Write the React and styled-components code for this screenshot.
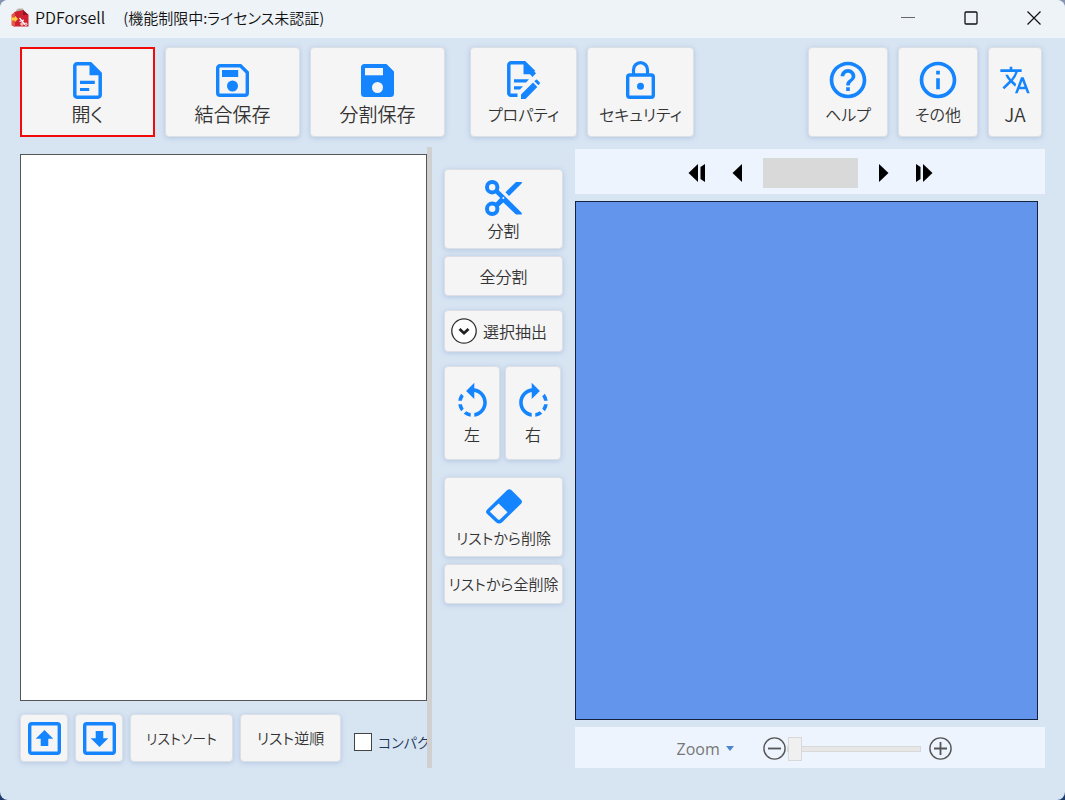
import React, { useState } from 'react';
import styled, { createGlobalStyle } from 'styled-components';
import { MdHelpOutline, MdInfoOutline, MdTranslate, MdRotateLeft, MdRotateRight } from 'react-icons/md';

const BLUE = '#1585ff';

const GlobalStyle = createGlobalStyle`
  * {
    box-sizing: border-box;
  }

  body {
    margin: 0;
    background: linear-gradient(#8794b0, #1d3a6c);
    font-family: 'Noto Sans CJK JP', sans-serif;
    font-feature-settings: 'palt';
    color: #333;
  }

  button, input, select {
    font: inherit;
    font-feature-settings: inherit;
    color: inherit;
  }
`;

const Window = styled.div`
  display: flex;
  flex-direction: column;
  min-height: 100vh;
  background: #d7e4f2;
  border-radius: 8px;
  overflow: hidden;
`;

const TitleBar = styled.header`
  display: flex;
  align-items: center;
  height: 38px;
  padding: 0 0 3px 11px;
  background: #eef3f8;
`;

const Title = styled.h1`
  display: flex;
  flex: 1;
  align-items: baseline;
  gap: 18px;
  margin: 0 0 0 6px;
  font-size: 16px;
  line-height: 24px;
  font-weight: 350;
  color: #111;
`;

const LicenseState = styled.span`
  font-size: 15px;
`;

const WindowButton = styled.button`
  display: flex;
  align-items: center;
  justify-content: center;
  width: 63px;
  height: 34px;
  padding: 0;
  border: none;
  background: none;
  color: #111;
`;

const Toolbar = styled.nav`
  display: flex;
  gap: 10px;
  padding: 9px 23px 10px 20px;
`;

const ToolGroup = styled.div`
  display: flex;
  gap: 10px;
  margin-left: ${(props) => (props.$end ? 'auto' : props.$apart ? '15px' : '0')};
`;

const Button = styled.button`
  display: flex;
  flex-direction: ${(props) => (props.$row ? 'row' : 'column')};
  align-items: center;
  justify-content: ${(props) => (props.$row ? 'flex-start' : 'center')};
  gap: 6px;
  flex-shrink: 0;
  width: ${(props) => (props.$width ? `${props.$width}px` : 'auto')};
  height: ${(props) => props.$height}px;
  padding: ${(props) => (props.$row ? '0 6px' : '0')};
  border: 1px solid #dcdfe4;
  border-radius: 4px;
  background: #f5f5f5;
  box-shadow: 0 1px 5px rgba(110, 140, 200, 0.35);
  font-size: ${(props) => props.$size || 16}px;
  line-height: 22px;
  font-weight: 350;
  white-space: nowrap;
  cursor: pointer;
`;

const IconButton = styled(Button)`
  gap: 0;
`;

const ToolButton = styled(IconButton)`
  height: 90px;
  line-height: 24px;
  ${(props) => props.$selected && 'border: 2px solid #f00a0a; border-radius: 0; box-shadow: none;'}
`;

const IconSlot = styled.span`
  display: flex;
  align-items: center;
  justify-content: center;
  height: 42px;
  color: ${BLUE};

  ${ToolButton} & {
    height: 44px;
  }
`;

const Workspace = styled.main`
  display: flex;
  flex: 1;
  padding: 0 20px 32px;
`;

const ListPane = styled.section`
  display: flex;
  flex-direction: column;
  flex: 407 1 0;
  min-width: 0;
  padding: 7px 0 6px;
`;

const FileList = styled.div`
  flex: 1;
  border: 1px solid #555;
  background: #fff;
`;

const ListActions = styled.div`
  display: flex;
  gap: 7px;
  margin-top: 13px;
`;

const CompactLabel = styled.label`
  display: flex;
  align-items: center;
  gap: 6px;
  margin: 8px 0 0 6px;
  font-size: 14px;
  font-weight: 350;
  white-space: nowrap;
  color: #1d3557;
`;

const CheckBox = styled.input`
  appearance: none;
  flex-shrink: 0;
  width: 18px;
  height: 18px;
  margin: 0;
  border: 1px solid #444;
  background: #fff;

  &:checked {
    background: ${BLUE};
  }
`;

const Splitter = styled.div`
  width: 5px;
  background: #d0d0d0;
`;

const ActionPane = styled.section`
  display: flex;
  flex-direction: column;
  gap: 14px;
  width: 119px;
  margin: 22px 12px 0;
`;

const ActionGroup = styled.div`
  display: flex;
  flex-direction: ${(props) => (props.$row ? 'row' : 'column')};
  gap: ${(props) => (props.$row ? 5 : 7)}px;
  margin-top: ${(props) => (props.$apart ? '3px' : '0')};
`;

const PreviewPane = styled.section`
  display: flex;
  flex-direction: column;
  gap: 7px;
  flex: 470 1 0;
  min-width: 0;
  padding-top: 2px;
`;

const PreviewBar = styled.div`
  display: flex;
  align-items: center;
  justify-content: center;
  background: #edf4fd;
`;

const PageBar = styled(PreviewBar)`
  height: 45px;
  padding-top: 2px;
`;

const ZoomBar = styled(PreviewBar)`
  height: 41px;
  padding: 2px 0 0 8px;
`;

const PageButton = styled.button`
  display: flex;
  align-items: center;
  justify-content: center;
  width: 40px;
  height: 32px;
  padding: 0;
  border: none;
  background: none;
  color: #000;
`;

const PageInput = styled.input`
  width: 95px;
  height: 30px;
  margin: 0 6px;
  border: 1px solid #d6dbd9;
  background: #d9d9d9;
  text-align: center;
`;

const Preview = styled.div`
  flex: 1;
  margin-right: 7px;
  border: 1px solid #14213f;
  background: #6495ed;
`;

const ZoomPicker = styled.div`
  display: flex;
  align-items: center;
  gap: 5px;
  margin-right: 29px;
  color: #4a86cf;
`;

const ZoomSelect = styled.select`
  appearance: none;
  padding: 0;
  border: none;
  background: none;
  font-family: 'Open Sans', sans-serif;
  font-size: 16px;
  color: #777;
`;

const RoundButton = styled.button`
  display: flex;
  padding: 0;
  border: none;
  background: none;
  color: #555;
`;

const ZoomSlider = styled.input`
  appearance: none;
  width: 134px;
  height: 24px;
  margin: 0 8px 0 1px;
  background: none;

  &::-webkit-slider-runnable-track {
    height: 6px;
    border: 1px solid #d8d8d8;
    background: #e7e7e7;
  }

  &::-webkit-slider-thumb {
    appearance: none;
    width: 14px;
    height: 24px;
    margin-top: -10px;
    border: 1px solid #d8d8d8;
    background: #f0f0f0;
  }
`;

const AppLogo = () => (
	<svg width="18" height="20" viewBox="0 0 18 20">
		<path d="M5 2.5L7 0.5H12L13 3L5 5Z" fill="#b9b3ac" />
		<path d="M3 4L12 2L17.5 7V18.5H3Z" fill="#cf2230" />
		<path d="M12 2L17.5 7H12Z" fill="#8f1520" />
		<path d="M0.5 6.5L4 4V19L0.5 17.5Z" fill="#e2574c" />
		<path d="M0.5 9.5H4V7.8L7 11L4 14V12.5H0.5Z" fill="#ffd23c" />
		<path d="M8.5 10L14 16.5M8.5 13.5L13 12" stroke="#fff" strokeWidth="1.2" />
		<circle cx="14.8" cy="16.2" r="1.2" fill="none" stroke="#fff" />
		<circle cx="11" cy="16" r="1.2" fill="none" stroke="#fff" />
	</svg>
);

const FileIcon = () => (
	<svg width="29" height="37" viewBox="0 0 29 37">
		<path d="M4 1.8H17.5L27.2 11.5V33a2.2 2.2 0 0 1-2.2 2.2H4A2.2 2.2 0 0 1 1.8 33V4A2.2 2.2 0 0 1 4 1.8Z" fill="none" stroke="currentColor" strokeWidth="3.5" />
		<path d="M16.5 2H18.5L27.5 11V13.3H16.5ZM7 18.8H21.8V22H7ZM7 25.9H16.2V29.1H7Z" fill="currentColor" />
	</svg>
);

const SaveIcon = () => (
	<svg width="33" height="33" viewBox="0 0 33 33">
		<path d="M4 1.7H24.5L31.3 8.5V29a2.3 2.3 0 0 1-2.3 2.3H4A2.3 2.3 0 0 1 1.7 29V4A2.3 2.3 0 0 1 4 1.7Z" fill="none" stroke="currentColor" strokeWidth="3.4" />
		<path d="M6 6H22.2V13H6Z" fill="currentColor" />
		<circle cx="16.5" cy="22" r="5.5" fill="currentColor" />
	</svg>
);

const SaveFilledIcon = () => (
	<svg width="33" height="33" viewBox="0 0 33 33">
		<path d="M3.5 0H25.5L33 7.5V29.5A3.5 3.5 0 0 1 29.5 33H3.5A3.5 3.5 0 0 1 0 29.5V3.5A3.5 3.5 0 0 1 3.5 0Z" fill="currentColor" />
		<path d="M4 4H22V11.3H4Z" fill="#f5f5f5" />
		<circle cx="16.5" cy="23.5" r="5.5" fill="#f5f5f5" />
	</svg>
);

const PropertyIcon = () => (
	<svg width="33" height="38" viewBox="0 0 33 38">
		<path d="M10.5 34.3H4A2.2 2.2 0 0 1 1.8 32V4A2.2 2.2 0 0 1 4 1.8H17.5L27 11" fill="none" stroke="currentColor" strokeWidth="3.5" />
		<path d="M16.5 2H19L29 12.2L25.5 16L23 13.3H16.5ZM7 18.2H22L19 21.4H7ZM7 25.3H16L13 28.5H7Z" fill="currentColor" />
		<path d="M14 38V33.5L26 21.5L30.3 26L18.5 38ZM27.3 20.3L29 18.7Q29.6 18.3 30.2 18.8L32.8 21.5Q33.2 22.1 32.7 22.8L31.4 24.3Z" fill="currentColor" />
	</svg>
);

const LockIcon = () => (
	<svg width="29" height="38" viewBox="0 0 29 38">
		<path d="M7.5 14V8.7a7 7 0 0 1 14 0V14" fill="none" stroke="currentColor" strokeWidth="3.2" />
		<rect x="1.7" y="14" width="25.6" height="22.3" rx="2" fill="none" stroke="currentColor" strokeWidth="3.4" />
		<circle cx="14.5" cy="25.2" r="3.5" fill="currentColor" />
	</svg>
);

const ScissorsIcon = () => (
	<svg width="37" height="36" viewBox="0 0 37 36">
		<circle cx="7.2" cy="7.2" r="5.2" fill="none" stroke="currentColor" strokeWidth="4" />
		<circle cx="7.2" cy="28.8" r="5.2" fill="none" stroke="currentColor" strokeWidth="4" />
		<path d="M10 12.8L13 9.4L36.8 33V34.5H31L18.3 22.4L13 27.2L9.7 23.7L15.2 18Z" fill="currentColor" />
		<path d="M20.5 12.2L31 2H36.8V3.3L24 16Z" fill="currentColor" />
		<circle cx="18.4" cy="18" r="1" fill="#f5f5f5" />
	</svg>
);

const EraserIcon = () => (
	<svg width="36" height="35" viewBox="0 0 36 35">
		<path d="M21 1.3a3.4 3.4 0 0 1 4.6 0L34.8 10.4a3.2 3.2 0 0 1 0 4.6L16.2 33.2a4.6 4.6 0 0 1-6.2 0L1.2 25a3.2 3.2 0 0 1 0-4.6Z" fill="currentColor" />
		<path d="M12.6 14.5L21.5 23.2L14.2 30.3a1.8 1.8 0 0 1-2.4 0L4.2 23a0.5 0.5 0 0 1 0-0.7Z" fill="#f5f5f5" />
	</svg>
);

const ArrowBoxIcon = ({ down }) => (
	<svg width="33" height="33" viewBox="0 0 33 33">
		<rect x="1.7" y="1.7" width="29.6" height="29.6" rx="2" fill="none" stroke="currentColor" strokeWidth="3.4" />
		<path d={down ? 'M12.7 9H20.3V16.2H25.3L16.5 25L7.7 16.2H12.7Z' : 'M12.7 24H20.3V16.8H25.3L16.5 8L7.7 16.8H12.7Z'} fill="currentColor" />
	</svg>
);

const ExpandIcon = () => (
	<svg width="26" height="26" viewBox="0 0 26 26">
		<circle cx="13" cy="13" r="12.2" fill="#fff" stroke="#333" strokeWidth="1.3" />
		<path d="M8.5 11L13 15.2L17.5 11" fill="none" stroke="#222" strokeWidth="2.8" />
	</svg>
);

const PageIcon = ({ double, forward }) => (
	<svg width={double ? 18 : 10} height="18" viewBox={double ? '0 0 18 18' : '0 0 10 18'}>
		<g transform={forward ? `matrix(-1 0 0 1 ${double ? 18 : 10} 0)` : undefined} fill="currentColor">
			<path d="M0.5 9L10 0V18Z" />
			{double && <path d="M12.5 3L17 0V18L12.5 15Z" />}
		</g>
	</svg>
);

const SignIcon = ({ plus }) => (
	<svg width="23" height="23" viewBox="0 0 23 23" fill="none" stroke="currentColor">
		<circle cx="11.5" cy="11.5" r="10.6" strokeWidth="1.4" />
		<path d={plus ? 'M5 11.5H18M11.5 5V18' : 'M5 11.5H18'} strokeWidth="1.8" />
	</svg>
);

const App = () => {
	const [compact, setCompact] = useState(false);
	const [zoom, setZoom] = useState(0);

	return (
		<>
			<GlobalStyle />
			<Window>
				<TitleBar>
					<AppLogo />
					<Title>
						<span>PDForsell</span>
						<LicenseState>(機能制限中:ライセンス未認証)</LicenseState>
					</Title>
					<WindowButton aria-label="最小化">
						<svg width="14" height="14" viewBox="0 0 14 14"><path d="M0 6.5H14" stroke="#666" /></svg>
					</WindowButton>
					<WindowButton aria-label="最大化">
						<svg width="14" height="14" viewBox="0 0 14 14"><rect x="1" y="1" width="12" height="12" rx="1" fill="none" stroke="currentColor" strokeWidth="1.3" /></svg>
					</WindowButton>
					<WindowButton aria-label="閉じる">
						<svg width="14" height="14" viewBox="0 0 14 14"><path d="M0.5 0.5L13.5 13.5M13.5 0.5L0.5 13.5" stroke="currentColor" strokeWidth="1.2" /></svg>
					</WindowButton>
				</TitleBar>

				<Toolbar>
					<ToolGroup>
						<ToolButton $width={135} $size={19} $selected><IconSlot><FileIcon /></IconSlot>開く</ToolButton>
						<ToolButton $width={135} $size={19}><IconSlot><SaveIcon /></IconSlot>結合保存</ToolButton>
						<ToolButton $width={135} $size={19}><IconSlot><SaveFilledIcon /></IconSlot>分割保存</ToolButton>
					</ToolGroup>
					<ToolGroup $apart>
						<ToolButton $width={107}><IconSlot><PropertyIcon /></IconSlot>プロパティ</ToolButton>
						<ToolButton $width={107}><IconSlot><LockIcon /></IconSlot>セキュリティ</ToolButton>
					</ToolGroup>
					<ToolGroup $end>
						<ToolButton $width={80}><IconSlot><MdHelpOutline size={44} /></IconSlot>ヘルプ</ToolButton>
						<ToolButton $width={80}><IconSlot><MdInfoOutline size={44} /></IconSlot>その他</ToolButton>
						<ToolButton $width={54} $size={19}><IconSlot><MdTranslate size={32} /></IconSlot>JA</ToolButton>
					</ToolGroup>
				</Toolbar>

				<Workspace>
					<ListPane>
						<FileList />
						<ListActions>
							<Button $width={48} $height={48} aria-label="上へ"><IconSlot><ArrowBoxIcon /></IconSlot></Button>
							<Button $width={48} $height={48} aria-label="下へ"><IconSlot><ArrowBoxIcon down /></IconSlot></Button>
							<Button $width={103} $height={48} $size={14}>リストソート</Button>
							<Button $width={101} $height={48} $size={15}>リスト逆順</Button>
							<CompactLabel>
								<CheckBox type="checkbox" checked={compact} onChange={(e) => setCompact(e.target.checked)} />
								コンパク
							</CompactLabel>
						</ListActions>
					</ListPane>

					<Splitter />

					<ActionPane>
						<ActionGroup>
							<IconButton $height={80}><IconSlot><ScissorsIcon /></IconSlot>分割</IconButton>
							<Button $height={40}>全分割</Button>
						</ActionGroup>
						<Button $height={42} $row><ExpandIcon />選択抽出</Button>
						<ActionGroup $row>
							<IconButton $width={56} $height={94}><IconSlot><MdRotateLeft size={43} /></IconSlot>左</IconButton>
							<IconButton $width={56} $height={94}><IconSlot><MdRotateRight size={43} /></IconSlot>右</IconButton>
						</ActionGroup>
						<ActionGroup $apart>
							<IconButton $height={80} $size={15}><IconSlot><EraserIcon /></IconSlot>リストから削除</IconButton>
							<Button $height={40} $size={15}>リストから全削除</Button>
						</ActionGroup>
					</ActionPane>

					<PreviewPane>
						<PageBar>
							<PageButton aria-label="最初のページ"><PageIcon double /></PageButton>
							<PageButton aria-label="前のページ"><PageIcon /></PageButton>
							<PageInput aria-label="ページ" />
							<PageButton aria-label="次のページ"><PageIcon forward /></PageButton>
							<PageButton aria-label="最後のページ"><PageIcon double forward /></PageButton>
						</PageBar>
						<Preview />
						<ZoomBar>
							<ZoomPicker>
								<ZoomSelect aria-label="Zoom">
									<option>Zoom</option>
								</ZoomSelect>
								<svg width="8" height="5" viewBox="0 0 8 5"><path d="M0 0H8L4 5Z" fill="currentColor" /></svg>
							</ZoomPicker>
							<RoundButton aria-label="縮小" onClick={() => setZoom(Math.max(0, zoom - 10))}><SignIcon /></RoundButton>
							<ZoomSlider
								type="range"
								aria-label="倍率"
								min="0"
								max="100"
								value={zoom}
								onChange={(e) => setZoom(Number(e.target.value))}
							/>
							<RoundButton aria-label="拡大" onClick={() => setZoom(Math.min(100, zoom + 10))}><SignIcon plus /></RoundButton>
						</ZoomBar>
					</PreviewPane>
				</Workspace>
			</Window>
		</>
	);
};

export default App;
